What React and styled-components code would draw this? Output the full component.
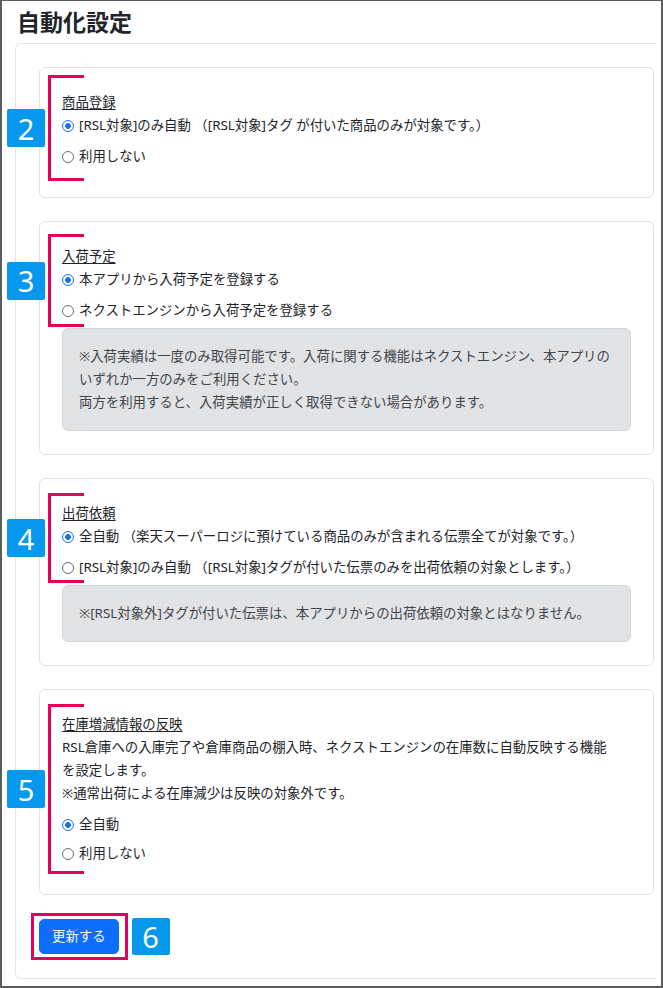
import styled, { createGlobalStyle } from 'styled-components'

const GlobalStyle = createGlobalStyle`
  body {
    margin: 0;
    background: #fff;
  }
  * {
    box-sizing: border-box;
  }
`;

const Frame = styled.div`
  width: 663px;
  height: 988px;
  border: 2px solid #5c5c5c;
  border-top-width: 1px;
  padding: 0 5px 0 13px;
  font-family: "Noto Sans", "Noto Sans CJK JP", sans-serif;
  font-size: 13.4px;
  line-height: 23px;
  color: #212529;
  overflow: hidden;
`;

const PageTitle = styled.h2`
  margin: 8px 0 8px 2px;
  font-size: 23px;
  line-height: 26px;
  font-weight: 700;
`;

const Panel = styled.div`
  display: flex;
  flex-direction: column;
  gap: 23px;
  padding: 23px 2px 23px 23px;
  border: 1px solid #e3e5e8;
  border-right: none;
  border-radius: 6px 0 0 6px;
`;

const Card = styled.section`
  position: relative;
  padding: 23px 22px;
  border: 1px solid #dfe2e6;
  border-radius: 6px;
`;

const SectionTitle = styled.div`
  text-decoration: underline;
  text-underline-offset: 2px;
`;

const Description = styled.p`
  margin: 0 0 8px;
`;

const RadioList = styled.div`
  display: flex;
  flex-direction: column;
  gap: ${({ $gap }) => $gap}px;
  margin-bottom: 6px;
`;

const RadioRow = styled.label`
  display: flex;
  align-items: center;
  gap: 5px;
  white-space: nowrap;
`;

const Radio = styled.input.attrs({ type: 'radio' })`
  appearance: none;
  margin: 0;
  width: 12px;
  height: 12px;
  flex: none;
  border-radius: 50%;
  border: 1px solid #6d6d6d;
  background: #fff;

  &:checked {
    border: 1.5px solid #1a6ef5;
    background: radial-gradient(circle, #1a6ef5 0 2.6px, #fff 3.1px);
  }
`;

const Note = styled.div`
  padding: 16px;
  background: #e2e3e5;
  border: 1px solid #d3d6d8;
  border-radius: 6px;
  color: #41464b;
`;

const Bracket = styled.div`
  position: absolute;
  left: 8px;
  top: ${({ $top }) => $top}px;
  height: ${({ $height }) => $height}px;
  width: 36px;
  border: 3px solid #e6005c;
  border-right: none;
  pointer-events: none;
`;

const StepBadge = styled.span`
  display: flex;
  align-items: center;
  justify-content: center;
  width: 38px;
  height: 38px;
  background: #0598ee;
  border-radius: 2px;
  color: #fff;
  font-family: "Noto Sans", sans-serif;
  font-size: 29px;
  line-height: 1;
`;

const BracketBadge = styled(StepBadge)`
  position: absolute;
  left: -44px;
  top: 50%;
  transform: translateY(-50%);
`;

const Actions = styled.div`
  display: flex;
  align-items: center;
  gap: 13px;
`;

const SubmitWrap = styled.div`
  position: relative;
`;

const Highlight = styled.span`
  position: absolute;
  inset: -6px -9px -6px -8px;
  border: 3px solid #e6005c;
  pointer-events: none;
`;

const SubmitButton = styled.button`
  display: block;
  padding: 5px 12px;
  border: 1px solid #0d6efd;
  border-radius: 5px;
  background: #0d6efd;
  color: #fff;
  font-family: inherit;
  font-size: 13.4px;
  line-height: 23px;
`;

const Marker = ({ step, top, height }) => (
  <Bracket $top={top} $height={height}>
    <BracketBadge>{step}</BracketBadge>
  </Bracket>
);

const Option = ({ name, checked, children }) => (
  <RadioRow>
    <Radio name={name} defaultChecked={checked} />
    {children}
  </RadioRow>
);

export default function App() {
  return (
    <>
      <GlobalStyle />
      <Frame>
        <PageTitle>自動化設定</PageTitle>
        <Panel>
          <Card>
            <Marker step="2" top={7} height={106} />
            <SectionTitle>商品登録</SectionTitle>
            <RadioList $gap={8}>
              <Option name="item" checked>[RSL対象]のみ自動 （[RSL対象]タグ が付いた商品のみが対象です。）</Option>
              <Option name="item">利用しない</Option>
            </RadioList>
          </Card>

          <Card>
            <Marker step="3" top={12} height={93} />
            <SectionTitle>入荷予定</SectionTitle>
            <RadioList $gap={8}>
              <Option name="arrival" checked>本アプリから入荷予定を登録する</Option>
              <Option name="arrival">ネクストエンジンから入荷予定を登録する</Option>
            </RadioList>
            <Note>
              ※入荷実績は一度のみ取得可能です。入荷に関する機能はネクストエンジン、本アプリの
              <br />
              いずれか一方のみをご利用ください。
              <br />
              両方を利用すると、入荷実績が正しく取得できない場合があります。
            </Note>
          </Card>

          <Card>
            <Marker step="4" top={14} height={90} />
            <SectionTitle>出荷依頼</SectionTitle>
            <RadioList $gap={8}>
              <Option name="shipping" checked>全自動 （楽天スーパーロジに預けている商品のみが含まれる伝票全てが対象です。）</Option>
              <Option name="shipping">[RSL対象]のみ自動 （[RSL対象]タグが付いた伝票のみを出荷依頼の対象とします。）</Option>
            </RadioList>
            <Note>※[RSL対象外]タグが付いた伝票は、本アプリからの出荷依頼の対象とはなりません。</Note>
          </Card>

          <Card>
            <Marker step="5" top={14} height={170} />
            <SectionTitle>在庫増減情報の反映</SectionTitle>
            <Description>
              RSL倉庫への入庫完了や倉庫商品の棚入時、ネクストエンジンの在庫数に自動反映する機能
              <br />
              を設定します。
              <br />
              ※通常出荷による在庫減少は反映の対象外です。
            </Description>
            <RadioList $gap={6}>
              <Option name="stock" checked>全自動</Option>
              <Option name="stock">利用しない</Option>
            </RadioList>
          </Card>

          <Actions>
            <SubmitWrap>
              <SubmitButton type="button">更新する</SubmitButton>
              <Highlight />
            </SubmitWrap>
            <StepBadge style={{ height: 37 }}>6</StepBadge>
          </Actions>
        </Panel>
      </Frame>
    </>
  )
}
